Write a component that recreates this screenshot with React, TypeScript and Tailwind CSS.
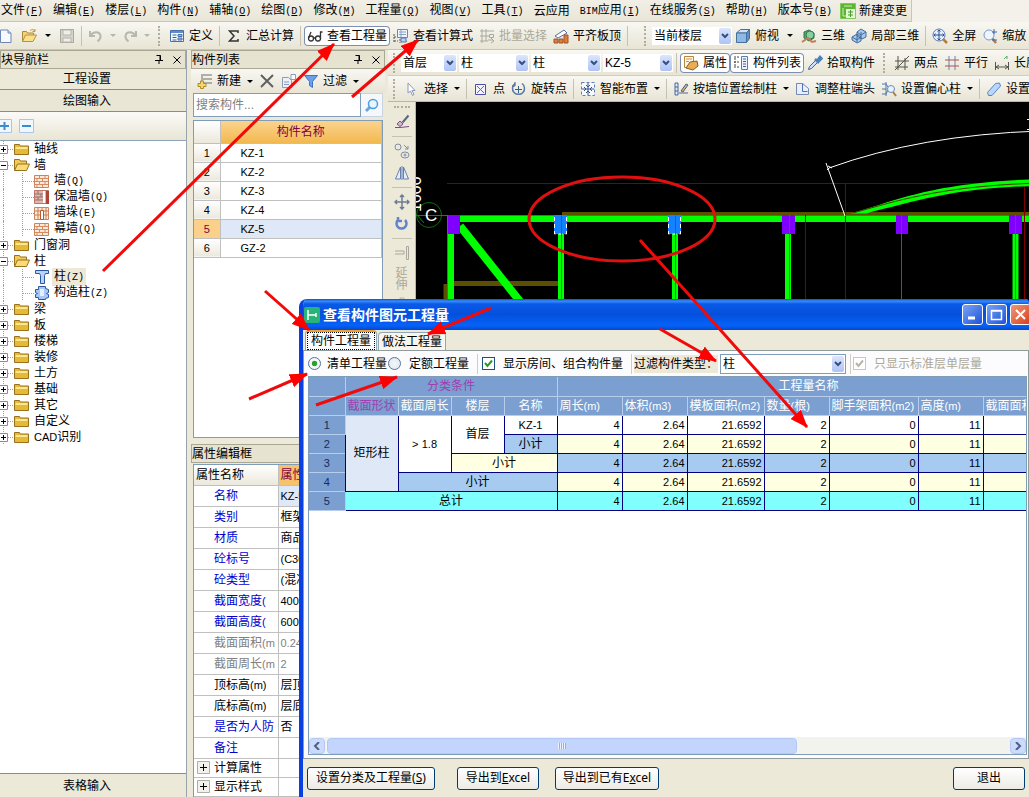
import { useState } from 'react';
import type { ReactNode } from 'react';
import clsx from 'clsx';

const ICONS: Record<string, ReactNode> = {
  file: (
    <>
      <path d="M1.500 2h7.500l3 3v9.500h-10.500z" fill="#f6f9ff" stroke="#6d86b3" />
      <path d="M9 2v3h3" fill="#d5e0f4" stroke="#6d86b3" />
    </>
  ),
  open: (
    <>
      <path d="M1.500 13.500v-10h4l1 1.500h6v3" fill="#f3d27b" stroke="#a88a3d" />
      <path d="M1.500 13.500l3-6.500h11l-3.500 6.500z" fill="#fbe08c" stroke="#b8933b" />
      <path d="M9 2.500c2-1.500 4-1 5 .500m0-2v2.500h-2.500" fill="none" stroke="#c49a3c" />
    </>
  ),
  save: (
    <>
      <path d="M1.500 1.500h13v13h-13z" fill="#d6d4ca" stroke="#aaa89e" />
      <path d="M4 2h8v5h-8zM4 10h8v4h-8z" fill="#efeee8" stroke="#b7b5ac" />
    </>
  ),
  undo: <path d="M2 3v5h5M2.500 7.500c3-4.500 9-4 10 0c.500 3-1 4.500-3 6" fill="none" stroke="#bab8ae" strokeWidth="2" />,
  redo: <path d="M14 3v5h-5M13.500 7.500c-3-4.500-9-4-10 0c-.500 3 1 4.500 3 6" fill="none" stroke="#bab8ae" strokeWidth="2" />,
  define: (
    <>
      <path d="M1.500 2.500h13v11h-13z" fill="#f4f8ff" stroke="#4a70a8" />
      <path d="M2 3h12v2h-12z" fill="#5f8ccb" />
      <path d="M3.500 7h4M3.500 9.500h4M3.500 12h4" stroke="#3a5f9c" />
      <path d="M9 6.500h4v2h-4zM9 10h4v2h-4z" fill="#9fbce4" stroke="#4a70a8" />
    </>
  ),
  sigma: <path d="M12 5V3H3.500l4.500 5l-4.500 5h8.500v-2" fill="none" stroke="#333" strokeWidth="1.500" />,
  glasses: (
    <g fill="none" stroke="#333" strokeWidth="1.300">
      <circle cx="4" cy="10.500" r="2.500" />
      <circle cx="11" cy="10.500" r="2.500" />
      <path d="M6.500 10h2M1.500 10l2.500-6M13.500 10.500v-6.500h2" />
    </g>
  ),
  calc: (
    <>
      <path d="M4.500 1.500h10v8h-10z" fill="#eef4ff" stroke="#6c87b4" />
      <path d="M6 4h7M6 6.500h7M8 2v7" stroke="#8aa2ca" />
      <path d="M1 6v8M1 9h3M1 13h4M7 11v4M12 11l2 3" stroke="#555" strokeDasharray="2 1" />
      <path d="M8 10h5v4h-5z" fill="#b6cff5" stroke="#5b79ab" />
    </>
  ),
  batch: (
    <g fill="none" stroke="#aaa89e">
      <path d="M1 3h14M1 8h9M1 13h8M3 1v14M7 1v12" />
      <path d="M10.500 6.500h4v3h-4zM9 12h5M12 10l3 3-3 2" />
    </g>
  ),
  slab: (
    <>
      <path d="M2 8l9-6l3 3l-9 5z" fill="#fff" stroke="#536fa5" />
      <path d="M1 11h4v4h-4zM6 11h4v4h-4zM11 7h4v8h-4z" fill="#d9803f" stroke="#a3532a" />
    </>
  ),
  cube: (
    <>
      <path d="M1.500 5l4-3.500h9l-3 3.500z" fill="#cde3fb" stroke="#44719e" />
      <path d="M1.500 5h10v9.500h-10z" fill="#8fb9e4" stroke="#44719e" />
      <path d="M11.500 5l3-3.500v9l-3 4z" fill="#5f8fc4" stroke="#44719e" />
    </>
  ),
  orbit: (
    <>
      <path d="M3 4l5-2l5 3v5l-5 3l-5-3z" fill="#4ea96b" stroke="#2f7548" />
      <circle cx="9" cy="7" r="4" fill="#87cfa0" stroke="#397a52" />
      <path d="M1 14l6-4l4 4l4-1" fill="none" stroke="#c77b50" strokeWidth="2" />
    </>
  ),
  part3d: (
    <>
      <path d="M1 9l5-3l4 3v4l-4 2l-5-3zM6 4l4-3l5 3v5l-4 2l-5-3z" fill="#a8c8ee" stroke="#456e9d" />
      <path d="M6 6v8M1 9l5 3l4-3M10 4v7M6 4l4 3l5-3" fill="none" stroke="#456e9d" />
    </>
  ),
  full: (
    <>
      <path d="M11 11l4 4" stroke="#b77b3b" strokeWidth="2.500" />
      <circle cx="7" cy="7" r="6" fill="#e4efff" stroke="#5a7ab3" />
      <path d="M7 2v10M2 7h10M5.500 3.500L7 2l1.500 1.500M5.500 10.500L7 12l1.500-1.500M3.500 5.500L2 7l1.500 1.500M10.500 5.500L12 7l-1.500 1.500" fill="none" stroke="#2d4f92" />
    </>
  ),
  zoom: (
    <>
      <path d="M10 10l4 5" stroke="#b77b3b" strokeWidth="2.500" />
      <circle cx="7" cy="7" r="5" fill="#edf5ff" stroke="#7b98c8" />
      <path d="M12 1v5m-2-2h5M10 12h5" stroke="#3d65a7" />
    </>
  ),
  props: (
    <>
      <path d="M1.500 1.500h9v11h-9z" fill="#fff8e8" stroke="#b4863d" />
      <path d="M3 4h6M3 6.500h3" stroke="#d58e37" />
      <path d="M3 13l4-6l7-1l1 5l-5 4z" fill="#e8ae53" stroke="#8d5c1d" />
    </>
  ),
  list: (
    <>
      <path d="M8.500 1.500h6v13h-6z" fill="#eef4ff" stroke="#587dad" />
      <path d="M10 4h3M10 6.500h3M10 9h3M10 11.500h3" stroke="#3b64a1" />
      <path d="M1 2h2M1 7h2M1 12h2M4 2h3M4 7h3M4 12h3M2 3v9" stroke="#444" strokeDasharray="2 1" />
    </>
  ),
  pick: (
    <>
      <path d="M1.500 14.500l1-3l6.500-6.500l2 2l-6.500 6.500z" fill="#c9dffd" stroke="#44688f" />
      <path d="M8 4l4 4M10 6l3-4l1.500 1.500L11 7" stroke="#4d7fb9" strokeWidth="2.500" fill="#6f9bd1" />
    </>
  ),
  twoPoint: <path d="M4 1v14M11 3v12M1 6h14M1 12h13M1 15L15 1" stroke="#55534b" fill="none" />,
  parallel: (
    <>
      <path d="M5 1v14M11 1v14" stroke="#6d83a8" />
      <path d="M1 5h14M1 11h14" stroke="#b05450" />
    </>
  ),
  length: (
    <>
      <path d="M1.500 7v8M14.500 7v8M2 12h12M5 10l-3 2l3 2M11 10l3 2l-3 2" fill="none" stroke="#55534b" />
      <path d="M10 4l3-3m0 0v3" stroke="#5ba967" />
    </>
  ),
  cursor: <path d="M4 2v10l2.500-2l2 4.500l1.500-1l-2-4h3z" fill="#fff" stroke="#8b9abb" />,
  point: (
    <>
      <path d="M2.500 3.500h10v10h-10z" fill="#f3f2ff" stroke="#4c4cb0" />
      <path d="M4 5l7 7M11 5l-7 7" stroke="#a04d8d" />
    </>
  ),
  rotatePoint: (
    <>
      <path d="M4 2.500a6 6 0 1 0 7 0" fill="none" stroke="#557aa8" strokeWidth="1.500" />
      <path d="M4 1v4H1M7.500 5v7M4 8.500h7" fill="none" stroke="#405f8d" />
    </>
  ),
  smart: (
    <>
      <path d="M1.500 1.500h13v13h-13z" fill="#f5f8ff" stroke="#6380ae" strokeDasharray="3 2" />
      <path d="M8 2v12M2 8h12M6 4l2 2l2-2M6 12l2-2l2 2M4 6l2 2l-2 2M12 6l-2 2l2 2" fill="none" stroke="#3b5484" />
    </>
  ),
  wallPos: (
    <>
      <path d="M2 2h3v12h-3zM6 12h9" fill="#dfe9fb" stroke="#49699b" />
      <path d="M2 6h3M2 10h3M8 10l5-7l2 1l-5 7z" fill="#cbb06d" stroke="#4f638e" />
    </>
  ),
  adjust: (
    <>
      <path d="M1.500 2.500h6l6 5v6h-12z" fill="#e8effc" stroke="#7589b2" />
      <path d="M7.500 2.500v8h5" fill="none" stroke="#4f70b1" />
    </>
  ),
  offset: (
    <>
      <path d="M1 3h4l2 3M1 8h4M1 13h4l2-4M5 1v14" fill="none" stroke="#4b76a9" />
      <path d="M12 11l3 4" stroke="#b77b3b" strokeWidth="2" />
      <circle cx="10" cy="8" r="3.500" fill="#eaf3ff" stroke="#6b8bbb" />
    </>
  ),
  eraser: <path d="M1.500 11.500l8-9l4-.500l1 3l-8.500 9.500l-3.500 0z" fill="#b9d6fb" stroke="#5a86c1" />,
  add: (
    <>
      <path d="M6 2h9M6 6h9M6 10h9M5 1v10" stroke="#6f6d65" fill="none" />
      <path d="M3.500 8h3v2.500h2.500v3h-2.500v2h-3v-2h-2.500v-3h2.500z" fill="#f6d768" stroke="#ad8a2d" />
    </>
  ),
  remove: <path d="M2 2l12 12M14 2l-12 12" stroke="#606060" strokeWidth="2" />,
  copy: (
    <>
      <path d="M1.500 4.500h6l3 3v7h-9z" fill="#edf1fa" stroke="#8d9bb8" />
      <path d="M3 9h5M3 11.500h5M10 1.500h4.500v5h-4.500z" fill="#fff" stroke="#8d9bb8" />
    </>
  ),
  funnel: <path d="M1.500 2.500h13l-5 6v6l-3-2v-4z" fill="#6ba0ea" stroke="#3f72c0" />,
  search: (
    <>
      <path d="M6 10l-4 4" stroke="#6ea5dd" strokeWidth="3" />
      <circle cx="9" cy="7" r="4.500" fill="#e9f6ff" stroke="#4da0e0" strokeWidth="1.500" />
    </>
  ),
  brush: (
    <>
      <path d="M14.500 1.500l-6 7" stroke="#5b6782" strokeWidth="2" />
      <path d="M6 7l3 3l-3 2.500l-3-2.500z" fill="#d7b4dd" stroke="#755283" />
      <path d="M1 13.500h5l9-1" stroke="#7a4e78" fill="none" />
    </>
  ),
  shapes: (
    <g fill="none" stroke="#7e8daa">
      <circle cx="4" cy="4" r="3" />
      <path d="M10 2l4 4m0-3v3h-3" />
      <ellipse cx="11" cy="12" rx="4" ry="3" />
      <circle cx="11" cy="12" r="1" />
    </g>
  ),
  mirror: <path d="M6.500 2v12h-5zM9.500 2v12h5zM8 1v14" fill="#e7eefc" stroke="#6380b1" />,
  move: <path d="M8 1v14M1 8h14M6 3l2-2l2 2M6 13l2 2l2-2M3 6L1 8l2 2M13 6l2 2l-2 2" fill="none" stroke="#6e7b94" strokeWidth="1.500" />,
  rotate: <path d="M4 4a5 5 0 1 0 7 0M4 1v4h4" fill="none" stroke="#6284ce" strokeWidth="2.500" />,
  extend: <path d="M1 6h9v3h-9M12.500 1.500h2v13h-2z" fill="none" stroke="#aaa89e" />,
  cross: <path d="M6 1h4v5h5v4h-14v-4h5z" fill="none" stroke="#b5b3a9" />,
  change: (
    <>
      <path d="M.500.500h15v15h-15z" fill="#5cb531" stroke="#82c95c" />
      <path d="M4 3h8M3 5v8h7" stroke="#c7efaf" fill="none" />
      <path d="M6 6h9v9h-9z" fill="#e4f8d8" />
      <path d="M8 9h5M10.500 7v7M8 12h5" stroke="#4b9a2d" />
    </>
  ),
  plus: (
    <>
      <path d="M.500 1.500h14v13h-14z" fill="#f1f7ff" stroke="#aac5e8" />
      <path d="M3 8h9M7.500 4v8" stroke="#3e8bcb" strokeWidth="2" />
    </>
  ),
  minus: (
    <>
      <path d="M.500 1.500h14v13h-14z" fill="#f1f7ff" stroke="#aac5e8" />
      <path d="M3 8h9" stroke="#3e8bcb" strokeWidth="2" />
    </>
  ),
  folder: (
    <>
      <path d="M.500 3.500h5l1 1.500h8v8.500h-14z" fill="#e8b838" stroke="#98731c" />
      <path d="M1.500 6h12v2h-12z" fill="#fae68f" />
    </>
  ),
  folderOpen: (
    <>
      <path d="M.500 13.500v-11h5l1 1.500h6v3" fill="#f1ca58" stroke="#98731c" />
      <path d="M.500 13.500l3-6.500h12l-3 6.500z" fill="#f9dc78" stroke="#98731c" />
    </>
  ),
  brick: (
    <>
      <path d="M.500 2.500h14v12h-14z" fill="#f9eadc" stroke="#c98461" />
      <path d="M1 5.500h13M1 8.500h13M1 11.500h13M5.500 3v2.500M11 3v2.500M3 5.500v3M8.500 5.500v3M5.500 8.500v3M11 8.500v3M3 11.500v3M8.500 11.500v3" stroke="#d98a61" />
    </>
  ),
  brickInsulated: (
    <>
      <path d="M.500 1.500h14v13h-14z" fill="#e2b6ac" stroke="#b7766a" />
      <path d="M1 5h8M1 8h8M1 11h8M4 2v3M7 5v3M4 8v3" stroke="#94716f" />
      <path d="M9 2h2v12h-2z" fill="#fff" />
      <path d="M12 2h3v13h-3z" fill="#ad4433" />
    </>
  ),
  buttress: (
    <>
      <path d="M.500 2.500h14v12h-14z" fill="#f9eadc" stroke="#c98461" />
      <path d="M1 6h13M1 10h13M4 3v11M8 3v11M12 3v11" stroke="#cf7c50" />
      <path d="M6.500 5.500h3v9h-3z" fill="#fff" stroke="#b45b35" />
    </>
  ),
  column: <path d="M1.500 1.500h13v3h-3l-1 2v8h-4v-8l-1-2h-4z" fill="#b9d4fa" stroke="#2c569f" />,
  tieColumn: (
    <>
      <path d="M4.500 1.500h7v2l3 1v3l-2 1l2 1v3l-3 1v1h-7v-2h-3v-3l2-1l-2-1v-3h3z" fill="#a7c7f6" stroke="#2c569f" />
      <path d="M6 4h4v7h-4z" fill="#e3efff" />
    </>
  ),
};

function Icon({ name }: { name: string }) {
  return (
    <svg viewBox="0 0 16 16" className="h-4 w-4 shrink-0" aria-hidden="true">
      {ICONS[name]}
    </svg>
  );
}

// Latin runs are set narrower than the Chinese glyphs, two of them to one square
function Mixed({ text }: { text: string }) {
  return (
    <>
      {text.split(/([\x21-\x7e]+)/).map((part, i) =>
        i % 2 ? (
          <span key={i} className="font-['Liberation_Sans'] text-[11px]">{part}</span>
        ) : (
          part
        )
      )}
    </>
  );
}

const Sep = () => <span className="mx-[3px] h-5 w-px shrink-0 bg-[#c5c2b2]" />;
const Grip = () => <span className="mx-[5px] h-5 w-[3px] shrink-0 border-l-2 border-dotted border-[#b0ad9d]" />;

function Drop({ wide, muted }: { wide?: boolean; muted?: boolean }) {
  return (
    <button aria-label="▾" className={clsx('flex h-5 shrink-0 items-center justify-center', wide ? 'w-4' : 'w-3')}>
      <svg viewBox="0 0 6 3" className="h-[3px] w-1.5"><path d="M0 0h6L3 3z" fill={muted ? '#b8b6aa' : '#000'} /></svg>
    </button>
  );
}

function Tool({ icon, label, active, disabled }: { icon: string; label?: string; active?: boolean; disabled?: boolean }) {
  return (
    <button
      aria-label={label ? undefined : icon}
      disabled={disabled}
      className={clsx(
        'flex h-5 shrink-0 items-center gap-1 px-[3px] whitespace-nowrap',
        active && 'rounded-sm bg-white ring-1 ring-[#7c8fb0] ring-inset',
        disabled && 'text-[#aca899]'
      )}
    >
      <Icon name={icon} />
      {label}
    </button>
  );
}

function Combo({ label, value, className }: { label: string; value: string; className: string }) {
  return (
    <div className={clsx('relative shrink-0', className)}>
      <select aria-label={label} className="h-[18px] w-full appearance-none bg-white pl-0.5 outline-none" defaultValue={value}>
        <option>{value}</option>
      </select>
      <span className="pointer-events-none absolute top-px right-px bottom-px flex w-3 items-center justify-center rounded-[2px] bg-gradient-to-b from-[#dce6fd] to-[#aec3f5]">
        <svg viewBox="0 0 8 6" className="h-1.5 w-2"><path d="M1 1l3 3l3-3" fill="none" stroke="#33507f" strokeWidth="2" /></svg>
      </span>
    </div>
  );
}

const MENUS: [string, string?][] = [
  ['文件', 'F'], ['编辑', 'E'], ['楼层', 'L'], ['构件', 'N'], ['辅轴', 'O'], ['绘图', 'D'], ['修改', 'M'],
  ['工程量', 'Q'], ['视图', 'V'], ['工具', 'T'], ['云应用'], ['BIM应用', 'I'], ['在线服务', 'S'], ['帮助', 'H'], ['版本号', 'B'],
];

function MenuBar() {
  return (
    <nav className="flex h-[22px] shrink-0 bg-[#f3f1e9]">
      <div className="flex items-center gap-2.5 border-r border-b border-[#c9c6b8] bg-gradient-to-b from-[#f1efe6] to-[#e9e6d8] pr-1 pl-px">
        {MENUS.map(([name, key]) => (
          <button key={name} className="shrink-0 whitespace-nowrap">
            {name.startsWith('BIM') ? (
              <><span className="font-['Liberation_Mono'] text-[10px]">BIM</span>应用</>
            ) : name}
            {key && (
              <span className="font-['Liberation_Mono'] text-[10px]">(<u>{key}</u>)</span>
            )}
          </button>
        ))}
        <button className="-ml-0.5 flex shrink-0 items-center gap-[3px]">
          <Icon name="change" />新建变更
        </button>
      </div>
    </nav>
  );
}

function MainToolbar() {
  return (
    <div className="flex h-7 shrink-0 items-center border-b border-[#c9c6b8] bg-gradient-to-b from-[#f8f7f2] to-[#e8e5d5]">
      <div className="-ml-1 flex items-center">
        <Tool icon="file" />
        <Tool icon="open" />
        <Drop wide />
        <Tool icon="save" disabled />
      </div>
      <Sep />
      <Tool icon="undo" disabled />
      <Drop muted />
      <Tool icon="redo" disabled />
      <Drop muted />
      <Grip />
      <Tool icon="define" label="定义" />
      <Sep />
      <Tool icon="sigma" label="汇总计算" />
      <Sep />
      <Tool icon="glasses" label="查看工程量" active />
      <Tool icon="calc" label="查看计算式" />
      <Tool icon="batch" label="批量选择" disabled />
      <Tool icon="slab" label="平齐板顶" />
      <Sep />
      <span className="w-2 shrink-0" />
      <Grip />
      <Combo label="楼层范围" value="当前楼层" className="w-20" />
      <Tool icon="cube" label="俯视" />
      <Drop wide />
      <Tool icon="orbit" label="三维" />
      <Tool icon="part3d" label="局部三维" />
      <Sep />
      <Tool icon="full" label="全屏" />
      <Tool icon="zoom" label="缩放" />
    </div>
  );
}

function PanelTitle({ children }: { children: ReactNode }) {
  return (
    <div className="flex h-[19px] shrink-0 items-center border border-[#aaa794] bg-[#e6e3d1]">
      <h2 className="flex-1 truncate">{children}</h2>
      <button aria-label="pin" className="mr-2.5">
        <svg viewBox="0 0 8 9" className="h-[9px] w-2"><path d="M1.500.500h4v5h-4M5 .500v5M0 5.500h8M4 6v3" fill="none" stroke="#000" /></svg>
      </button>
      <button aria-label="close" className="mr-1">
        <svg viewBox="0 0 8 8" className="h-2 w-2"><path d="M.500.500l7 7M7.500.500l-7 7" stroke="#000" /></svg>
      </button>
    </div>
  );
}

interface TreeItem {
  name: string;
  icon?: string;
  open?: boolean;
  selected?: boolean;
}

const TREE: TreeItem[] = [
  { name: '轴线' },
  { name: '墙', open: true },
  { name: '墙(Q)', icon: 'brick' },
  { name: '保温墙(Q)', icon: 'brickInsulated' },
  { name: '墙垛(E)', icon: 'buttress' },
  { name: '幕墙(Q)', icon: 'brick' },
  { name: '门窗洞' },
  { name: '柱', open: true },
  { name: '柱(Z)', icon: 'column', selected: true },
  { name: '构造柱(Z)', icon: 'tieColumn' },
  { name: '梁' }, { name: '板' }, { name: '楼梯' }, { name: '装修' }, { name: '土方' },
  { name: '基础' }, { name: '其它' }, { name: '自定义' }, { name: 'CAD识别' },
];

function TreeRow({ item }: { item: TreeItem }) {
  if (item.icon) {
    return (
      <li className="flex h-4 items-center pl-[3px]">
        <span className="h-4 w-[19px] shrink-0 border-l border-dotted border-[#a0a0a0]" />
        <svg viewBox="0 0 12 16" className="h-4 w-3 shrink-0">
          <path d="M.500 0v16M1 8.500h11" stroke="#a0a0a0" strokeDasharray="1 1" />
        </svg>
        <Icon name={item.icon} />
        <span className={clsx('ml-0.5 px-0.5 leading-4', item.selected && 'bg-[#ece9d8]')}>
          {item.name.slice(0, -3)}
          <span className="font-['Liberation_Mono'] text-[10px]">{item.name.slice(-3)}</span>
        </span>
      </li>
    );
  }
  return (
    <li className="flex h-4 items-center">
      <svg viewBox="0 0 14 16" className="h-4 w-3.5 shrink-0">
        <path d="M3.500 0v16M8 8.500h6" stroke="#a0a0a0" strokeDasharray="1 1" />
        <path d="M-.500 4.500h8v8h-8z" fill="#fff" stroke="#7b8fa8" />
        <path d={item.open ? 'M1 8.500h5' : 'M1 8.500h5M3.500 6v5'} stroke="#000" />
      </svg>
      <Icon name={item.open ? 'folderOpen' : 'folder'} />
      <span className="ml-1 leading-4"><Mixed text={item.name} /></span>
    </li>
  );
}

function Navigator() {
  return (
    <aside className="flex w-[187px] shrink-0 flex-col border-r border-[#9aa3ad]">
      <PanelTitle>块导航栏</PanelTitle>
      <button className="h-[21px] shrink-0 border-b border-[#8f8c7c] bg-[#ece9d8] pr-3">工程设置</button>
      <button className="h-[22px] shrink-0 border-b border-[#8f8c7c] bg-[#e9e6d5] pr-3">绘图输入</button>
      <div className="-ml-1.5 flex h-7 shrink-0 items-center bg-gradient-to-b from-[#fbfaf7] to-[#e9e6d5]">
        <Tool icon="plus" />
        <Tool icon="minus" />
      </div>
      <ul className="min-h-0 flex-1 overflow-hidden border-t border-[#8da3b8] bg-white">
        {TREE.map(item => (
          <TreeRow key={item.name} item={item} />
        ))}
      </ul>
      <button className="h-6 shrink-0 border-t border-[#8f8c7c] bg-[#ece9d8] pr-3">表格输入</button>
    </aside>
  );
}

const COMPONENTS = ['KZ-1', 'KZ-2', 'KZ-3', 'KZ-4', 'KZ-5', 'GZ-2'];

function ComponentList() {
  const [selected, setSelected] = useState('KZ-5');
  const [query, setQuery] = useState('');

  return (
    <section className="flex h-[388px] shrink-0 flex-col">
      <PanelTitle>构件列表</PanelTitle>
      <div className="flex h-6 shrink-0 items-center bg-gradient-to-b from-[#f8f7f2] to-[#e8e5d5] pl-[3px]">
        <Tool icon="add" label="新建" />
        <Drop />
        <Tool icon="remove" />
        <Tool icon="copy" />
        <Tool icon="funnel" label="过滤" />
        <Drop />
      </div>
      <div className="mx-0.5 flex h-6 shrink-0">
        <input
          type="text"
          aria-label="搜索构件"
          placeholder="搜索构件..."
          value={query}
          onChange={(e) => setQuery(e.target.value)}
          className="min-w-0 flex-1 border border-[#7f9db9] bg-white px-0.5 placeholder:text-[#7f7f7f]"
        />
        <button aria-label="search" className="flex w-[22px] items-center justify-center border border-l-0 border-[#c9d4e0] bg-[#f4f7fb]">
          <Icon name="search" />
        </button>
      </div>
      <div className="mx-0.5 mt-[3px] flex-1 border border-[#7f9db9] bg-white">
        <table className="w-full table-fixed border-collapse">
          <thead>
            <tr className="h-[22px]">
              <th className="w-[26px] border-b border-[#c0c0c0] bg-gradient-to-b from-white to-[#ebe8dc]" />
              <th className="border border-t-0 border-[#c0c0c0] bg-gradient-to-b from-[#fbd38c] to-[#f2b84d] p-0 font-normal text-[#800040]">构件名称</th>
            </tr>
          </thead>
          <tbody>
            {COMPONENTS.map((name, i) => (
              <tr key={name} onClick={() => setSelected(name)} className={clsx('h-[19px]', selected === name && 'bg-[#dfe8f6]')}>
                <td className={clsx('border-b border-[#c0c0c0] p-0 text-center leading-[18px]', selected === name ? 'bg-[#fbd08a] text-[#800040]' : 'bg-gradient-to-b from-white to-[#ebe8dc]')}>
                  <Mixed text={String(i + 1)} />
                </td>
                <td className="border border-[#c0c0c0] py-0 pl-5 leading-[18px]"><Mixed text={name} /></td>
              </tr>
            ))}
          </tbody>
        </table>
      </div>
    </section>
  );
}

const PROPERTIES: [string, string, string][] = [
  ['名称', 'KZ-5', 'text-[#0000d0]'],
  ['类别', '框架柱', 'text-[#0000d0]'],
  ['材质', '商品混凝土', 'text-[#0000d0]'],
  ['砼标号', '(C30)', 'text-[#0000d0]'],
  ['砼类型', '(混凝土)', 'text-[#0000d0]'],
  ['截面宽度(', '400', 'text-[#0000d0]'],
  ['截面高度(', '600', 'text-[#0000d0]'],
  ['截面面积(m', '0.24', 'text-[#808080]'],
  ['截面周长(m', '2', 'text-[#808080]'],
  ['顶标高(m)', '层顶标高', 'text-black'],
  ['底标高(m)', '层底标高', 'text-black'],
  ['是否为人防', '否', 'text-[#0000d0]'],
  ['备注', '', 'text-[#0000d0]'],
];

function PropertyEditor() {
  return (
    <section className="mt-1.5 flex min-h-0 flex-1 flex-col overflow-hidden">
      <PanelTitle>属性编辑框</PanelTitle>
      <div className="mx-0.5 mt-px flex-1 border border-[#7f9db9] bg-white">
        <table className="w-full table-fixed border-collapse whitespace-nowrap">
          <thead>
            <tr className="h-5">
              <th className="w-[84px] border-r border-b border-[#c0c0c0] bg-gradient-to-b from-white to-[#ebe8dc] px-0.5 text-left font-normal">属性名称</th>
              <th className="border-b border-[#c0c0c0] bg-[#f5c36b] px-0.5 text-left font-normal text-[#800040]">属性值</th>
            </tr>
          </thead>
          <tbody>
            {PROPERTIES.map(([name, value, tone], i) => (
              <tr key={name} className="h-[21px]">
                <td className={clsx('overflow-hidden border-r border-b border-[#c0c0c0] py-0 pr-0 pl-5', tone)}><Mixed text={name} /></td>
                <td className={clsx('overflow-hidden border-b border-[#c0c0c0] px-0.5 py-0', i === 0 && 'bg-[#dfe8f6]', tone === 'text-[#808080]' && tone)}>
                  <Mixed text={value} />
                </td>
              </tr>
            ))}
            {['计算属性', '显示样式'].map(name => (
              <tr key={name} className="h-[19px]">
                <td className="border-r border-b border-[#c0c0c0] p-0">
                  <button className="flex h-[18px] items-center gap-1 pl-[3px]">
                    <svg viewBox="0 0 13 13" className="h-[13px] w-[13px]">
                      <path d="M.500.500h12v12h-12z" fill="#f2f1ec" stroke="#b0aea4" />
                      <path d="M3 6.500h7M6.500 3v7" stroke="#000" />
                    </svg>
                    {name}
                  </button>
                </td>
                <td className="border-b border-[#c0c0c0]" />
              </tr>
            ))}
          </tbody>
        </table>
      </div>
    </section>
  );
}

function DrawToolbars() {
  return (
    <div className="shrink-0 overflow-hidden">
      <div className="flex h-[26px] items-center border-b border-[#d2cfc0] bg-gradient-to-b from-[#f8f7f2] to-[#e8e5d5]">
        <Grip />
        <div className="flex gap-0.5">
          <Combo label="楼层" value="首层" className="w-14" />
          <Combo label="类型" value="柱" className="w-[70px]" />
          <Combo label="构件类型" value="柱" className="w-[70px]" />
          <Combo label="构件" value="KZ-5" className="w-[70px]" />
        </div>
        <Sep />
        <Tool icon="props" label="属性" active />
        <Tool icon="list" label="构件列表" active />
        <Tool icon="pick" label="拾取构件" />
        <Grip />
        <Tool icon="twoPoint" label="两点" />
        <Tool icon="parallel" label="平行" />
        <Tool icon="length" label="长度" />
      </div>
      <div className="flex h-[26px] items-center border-b border-[#b9b6a6] bg-gradient-to-b from-[#f8f7f2] to-[#e8e5d5]">
        <Grip />
        <Tool icon="cursor" label="选择" />
        <Drop />
        <Sep />
        <Tool icon="point" label="点" />
        <Tool icon="rotatePoint" label="旋转点" />
        <Sep />
        <Tool icon="smart" label="智能布置" />
        <Drop />
        <Sep />
        <Tool icon="wallPos" label="按墙位置绘制柱" />
        <Drop />
        <Tool icon="adjust" label="调整柱端头" />
        <Tool icon="offset" label="设置偏心柱" />
        <Drop />
        <Sep />
        <Tool icon="eraser" label="设置" />
      </div>
    </div>
  );
}

function SideTools() {
  return (
    <div className="flex w-7 shrink-0 flex-col items-center gap-1.5 border-r border-[#b9b6a6] bg-[#ece9d8] pt-1">
      <span className="w-4 border-t-2 border-dotted border-[#b0ad9d]" />
      <Icon name="brush" />
      <span className="h-px w-5 bg-[#c5c2b2]" />
      <Icon name="shapes" />
      <Icon name="mirror" />
      <span className="h-px w-5 bg-[#c5c2b2]" />
      <Icon name="move" />
      <Icon name="rotate" />
      <span className="h-px w-5 bg-[#c5c2b2]" />
      <Icon name="extend" />
      <span className="w-3 leading-3 text-[#aca899]">延伸</span>
      <Icon name="cross" />
    </div>
  );
}

function Canvas() {
  return (
    <svg className="h-full min-w-0 flex-1 bg-black" aria-label="平面图">
      <g transform="translate(-416 -102)">
        <path d="M447 183.500H1400" stroke="#7f0000" />
        <path d="M562 213.500H1400" stroke="#5a5000" strokeWidth="3" />
        <path d="M454 283.500h104M446 284v100" stroke="#5a5000" strokeWidth="5" />
        <path d="M460 226L538 324" stroke="#0f0" strokeWidth="8" />
        <path d="M450 219H1400" stroke="#0f0" strokeWidth="6" />
        <path d="M447 215.500H1400M447.500 215v200" stroke="#8c5a10" />
        <path d="M451 230v200M561 230v200M675 230v200M788 230v200M1015.500 230v200" stroke="#0f0" strokeWidth="6" />
        <path d="M448 215h12v19h-12zM782 215h13v19h-13zM896 215h12v19h-12zM1009 215h13v19h-13z" fill="#8000ff" />
        <path d="M554 215h13v19h-13zM668 215h13v19h-13z" fill="#1482ff" />
        <path d="M554.500 217v17h12v-17M668.500 217v17h12v-17" fill="none" stroke="#fff" strokeDasharray="4 3" />
        <path d="M561.500 215v200M675.500 215v200M789.500 215v200M1015.500 215v200" stroke="#92521c" />
        <path d="M805.500 215v200M845.500 184v200M1024.500 184v200" stroke="#7f0000" />
        <path d="M901.500 215v200M561.500 216v18M675.500 216v18M789.500 216v18M1015.500 216v18" stroke="#c8203c" />
        <path d="M851 213.500C900 199 936 182 1040 179v7C960 187 920 200 866 213.500z" fill="#0f0" />
        <path d="M853 213C900 200 942 186 1040 183" fill="none" stroke="#4a3800" />
        <path d="M826 163l19 53M829 168l-2 2m1-4l4 2M829 168Q920 135 1040 131" fill="none" stroke="#fff" />
        <path d="M1027 119.500h4M1027 129.500h4" stroke="#fff" />
        <circle cx="429" cy="215" r="12.500" fill="none" stroke="#0a6e0a" />
        <path d="M416 215.500h31M417 215l7 8" stroke="#0a8a0a" />
        <text x="425" y="221" fill="#fff" fontSize="17" fontFamily="Liberation Sans">C</text>
        <text transform="translate(421 212) rotate(-90)" fill="#fff" fontSize="16" fontFamily="Liberation Sans">1000</text>
      </g>
    </svg>
  );
}

const QUANTITIES = [
  { head: '周长(m)', value: '4', width: 'w-[65px]' },
  { head: '体积(m3)', value: '2.64', width: 'w-[65px]' },
  { head: '模板面积(m2)', value: '21.6592', width: 'w-[77px]' },
  { head: '数量(根)', value: '2', width: 'w-[65px]' },
  { head: '脚手架面积(m2)', value: '0', width: 'w-[89px]' },
  { head: '高度(m)', value: '11', width: 'w-[65px]' },
  { head: '截面面积(m2)', value: '', width: 'w-[89px]' },
];

const GROUPS: { text: string; className: string; rowSpan?: number; colSpan?: number }[][] = [
  [
    { text: '矩形柱', className: 'bg-[#dfe8f6]', rowSpan: 4 },
    { text: '> 1.8', className: 'bg-white', rowSpan: 3 },
    { text: '首层', className: 'bg-white', rowSpan: 2 },
    { text: 'KZ-1', className: 'bg-white' },
  ],
  [{ text: '小计', className: 'bg-[#a6caf0]' }],
  [{ text: '小计', className: 'bg-[#ffffe1]', colSpan: 2 }],
  [{ text: '小计', className: 'bg-[#a6caf0]', colSpan: 3 }],
  [{ text: '总计', className: 'bg-[#7ffffe]', colSpan: 4 }],
];

const ROW_COLORS = ['bg-white', 'bg-[#ffffe1]', 'bg-[#a6caf0]', 'bg-[#ffffe1]', 'bg-[#7ffffe]'];

function QuantityTable() {
  return (
    <table className="w-[752px] table-fixed border-collapse whitespace-nowrap">
      <colgroup>
        <col className="w-9" />
        <col className="w-[53px]" />
        <col className="w-[53px]" />
        <col className="w-[53px]" />
        <col className="w-[53px]" />
        {QUANTITIES.map(q => <col key={q.head} className={q.width} />)}
      </colgroup>
      <thead className="bg-[#7a9fd0] text-white">
        <tr className="h-[19px]">
          <th className="border border-t-0 border-l-0 border-[#b8cdea] p-0" />
          <th colSpan={4} className="border border-t-0 border-[#b8cdea] p-0 font-normal text-[#a040b0]">分类条件</th>
          <th colSpan={7} className="border border-t-0 border-[#b8cdea] p-0 pr-3 font-normal">工程量名称</th>
        </tr>
        <tr className="h-[19px]">
          <th className="border border-l-0 border-[#b8cdea]" />
          {['截面形状', '截面周长', '楼层', '名称'].map((head, i) => (
            <th key={head} className={clsx('border border-[#b8cdea] p-0 font-normal', i === 0 && 'text-[#a040b0]')}>{head}</th>
          ))}
          {QUANTITIES.map(q => (
            <th key={q.head} className="border border-[#b8cdea] py-0 pr-0 pl-0.5 text-left font-normal"><Mixed text={q.head} /></th>
          ))}
        </tr>
      </thead>
      <tbody>
        {GROUPS.map((cells, row) => (
          <tr key={row} className="h-[19px]">
            <td className="border border-l-0 border-[#b8cdea] bg-[#7a9fd0] p-0 text-center leading-[18px] text-[#1b2a5c]"><Mixed text={String(row + 1)} /></td>
            {cells.map(cell => (
              <td key={cell.text} rowSpan={cell.rowSpan} colSpan={cell.colSpan} className={clsx('border border-[#000080] p-0 text-center leading-[18px]', cell.className)}>
                <Mixed text={cell.text} />
              </td>
            ))}
            {QUANTITIES.map(q => (
              <td key={q.head} className={clsx('border border-[#000080] py-0 pr-0.5 pl-0 text-right leading-[18px]', ROW_COLORS[row])}>
                <Mixed text={q.value} />
              </td>
            ))}
          </tr>
        ))}
      </tbody>
    </table>
  );
}

const RADIO = 'h-[13px] w-[13px] shrink-0 appearance-none rounded-full border border-[#51759a] bg-[radial-gradient(circle,#f3f6fa,#dfe6ef)] checked:bg-[radial-gradient(circle,#2ba32b_0_30%,#f3f6fa_40%)]';

function CheckBox({ label, checked, disabled }: { label: string; checked: boolean; disabled?: boolean }) {
  const [on, setOn] = useState(checked);
  return (
    <label className={clsx('flex items-center gap-2 whitespace-nowrap', disabled && 'text-[#aca899]')}>
      <span className="relative flex h-[13px] w-[13px]">
        <input
          type="checkbox"
          checked={on}
          disabled={disabled}
          onChange={(e) => setOn(e.target.checked)}
          className={clsx('h-full w-full appearance-none border bg-white', disabled ? 'border-[#cac8bb]' : 'border-[#1c5180]')}
        />
        {on && (
          <svg viewBox="0 0 13 13" className="pointer-events-none absolute inset-0">
            <path d="M3 6l2.500 3l4.500-5.500" fill="none" stroke={disabled ? '#b8b6aa' : '#21a121'} strokeWidth="2" />
          </svg>
        )}
      </span>
      {label}
    </label>
  );
}

const TITLE_BUTTON = 'flex h-[21px] w-[21px] shrink-0 items-center justify-center rounded-[3px] border border-white';
const XP_BUTTON = "h-[23px] rounded-[3px] border border-[#003c74] bg-gradient-to-b from-white to-[#ecebe5] font-['Noto_Sans','Noto_Sans_CJK_SC',sans-serif] whitespace-nowrap";

function QuantityDialog() {
  const [mode, setMode] = useState('list');

  return (
    <div role="dialog" className="absolute top-[299px] -right-1 bottom-0 left-[299px] flex flex-col overflow-hidden rounded-t-lg border-x-4 border-[#0a3fe0] bg-[#ece9d8]">
      <header className="-mx-1 flex h-[31px] shrink-0 items-center gap-[3px] bg-[linear-gradient(180deg,#0a4fd0_0%,#3a8cf8_7%,#0a5ae8_16%,#0450dc_50%,#0562fa_85%,#0348cc_100%)] pr-0.5 pl-[5px] text-white">
        <svg viewBox="0 0 16 16" className="h-4 w-4 shrink-0">
          <rect width="16" height="16" rx="2" fill="#28b478" />
          <path d="M4 3v10M4 8h8M12 6v4" fill="none" stroke="#fff" strokeWidth="1.500" />
        </svg>
        <h1 className="flex-1 text-[14px] font-bold">查看构件图元工程量</h1>
        <button aria-label="minimize" className={clsx(TITLE_BUTTON, 'bg-gradient-to-br from-[#7ba2f5] to-[#1c50d8]')}>
          <svg viewBox="0 0 13 13" className="h-[13px] w-[13px]"><path d="M2 10h7" stroke="#fff" strokeWidth="3" /></svg>
        </button>
        <button aria-label="maximize" className={clsx(TITLE_BUTTON, 'bg-gradient-to-br from-[#7ba2f5] to-[#1c50d8]')}>
          <svg viewBox="0 0 13 13" className="h-[13px] w-[13px]"><path d="M1.500 2.500h10v9h-10zM1 3h11" fill="none" stroke="#fff" strokeWidth="1.500" /></svg>
        </button>
        <button aria-label="close" className={clsx(TITLE_BUTTON, 'bg-gradient-to-br from-[#f0957a] to-[#d43c14]')}>
          <svg viewBox="0 0 13 13" className="h-[13px] w-[13px]"><path d="M2 2l9 9M11 2l-9 9" stroke="#fff" strokeWidth="2" /></svg>
        </button>
      </header>

      <div className="flex h-5 shrink-0 items-end gap-px pl-0.5" role="tablist">
        <button role="tab" aria-selected="true" className="h-5 rounded-t-sm border-x border-t-2 border-[#91a7b4] border-t-[#f0a030] bg-[#fcfcfe] px-px">
          <span className="block border border-dotted border-black px-[3px] leading-4">构件工程量</span>
        </button>
        <button role="tab" aria-selected="false" className="h-[18px] rounded-t-sm border border-b-0 border-[#91a7b4] bg-[#f6f5ee] px-[3px]">做法工程量</button>
      </div>

      <div className="flex min-h-0 flex-1 flex-col border border-[#919b9c] bg-[#fcfcfe] pr-px pb-[3px] pl-1">
        <div className="flex h-[25px] shrink-0 items-center">
          <label className="flex shrink-0 items-center gap-1.5">
            <input type="radio" name="mode" checked={mode === 'list'} onChange={() => setMode('list')} className={RADIO} />
            清单工程量
          </label>
          <label className="flex shrink-0 items-center gap-2 pl-px">
            <input type="radio" name="mode" checked={mode === 'quota'} onChange={() => setMode('quota')} className={RADIO} />
            定额工程量
          </label>
          <span className="ml-2 h-5 w-px bg-[#d0cec0]" />
          <div className="pl-1"><CheckBox label="显示房间、组合构件量" checked /></div>
          <span className="ml-2 h-5 w-px bg-[#d0cec0]" />
          <span className="ml-0.5 shrink-0 bg-[#ece9d8] leading-[18px]">过滤构件类型：</span>
          <Combo label="过滤构件类型" value="柱" className="ml-0.5 w-[126px] border border-[#7f9db9]" />
          <span className="ml-1 h-5 w-px bg-[#d0cec0]" />
          <div className="pl-0.5"><CheckBox label="只显示标准层单层量" checked disabled /></div>
        </div>

        <div className="flex min-h-0 flex-1 flex-col border border-[#7f9db9] bg-white">
          <div className="min-h-0 flex-1 overflow-hidden">
            <QuantityTable />
          </div>
          <div className="flex h-[17px] shrink-0 items-center gap-0.5 bg-[#f3f3ee]">
            <button aria-label="scroll left" className="flex h-4 w-4 shrink-0 items-center justify-center rounded-sm border border-[#b4c8f6] bg-[#cbdafd]">
              <svg viewBox="0 0 8 8" className="h-2 w-2"><path d="M6 0l-4 4l4 4" fill="none" stroke="#4d6185" strokeWidth="2" /></svg>
            </button>
            <div className="min-w-0 flex-1">
              <div className="flex h-4 w-[69%] items-center justify-center gap-px rounded-sm border border-[#b4c8f6] bg-[#c4d5fd]">
                {[0, 1, 2, 3].map(i => <span key={i} className="h-1.5 w-px bg-[#eef4fe] shadow-[1px_0_0_#8cb0f8]" />)}
              </div>
            </div>
            <button aria-label="scroll right" className="flex h-4 w-4 shrink-0 items-center justify-center rounded-sm border border-[#b4c8f6] bg-[#cbdafd]">
              <svg viewBox="0 0 8 8" className="h-2 w-2"><path d="M2 0l4 4l-4 4" fill="none" stroke="#4d6185" strokeWidth="2" /></svg>
            </button>
          </div>
        </div>
      </div>

      <footer className="flex h-[38px] shrink-0 items-center pr-1 pl-1">
        <button className={clsx(XP_BUTTON, 'w-32')}>设置分类及工程量(<u>S</u>)</button>
        <button className={clsx(XP_BUTTON, 'ml-[22px] w-[82px]')}>导出到<u>E</u>xcel</button>
        <button className={clsx(XP_BUTTON, 'ml-4 w-26')}>导出到已有E<u>x</u>cel</button>
        <span className="flex-1" />
        <button className={clsx(XP_BUTTON, 'w-[72px]')}>退出</button>
      </footer>
    </div>
  );
}

const ARROWS = [
  'M103 271L334 44',
  'M352 97L418 40',
  'M265 291L309 330',
  'M249 399L307 374',
  'M316 405L397 377',
  'M491 308L428 334',
  'M660 329L716 361',
  'M640 240L807 427',
];

function Annotations() {
  return (
    <svg className="pointer-events-none absolute inset-0 h-full w-full" aria-hidden="true">
      <defs>
        <marker id="head" markerUnits="userSpaceOnUse" markerWidth="18" markerHeight="14" refX="17" refY="7" orient="auto">
          <path d="M0 0l18 7l-18 7z" fill="#f00" />
        </marker>
      </defs>
      <ellipse cx="622" cy="219" rx="93" ry="42" fill="none" stroke="#e01010" strokeWidth="3" />
      {ARROWS.map(d => (
        <path key={d} d={d} stroke="#f00a0a" strokeWidth="3" markerEnd="url(#head)" />
      ))}
    </svg>
  );
}

export default function App() {
  return (
    <div className="relative flex h-screen flex-col overflow-hidden bg-[#ece9d8] font-['Liberation_Sans','Noto_Sans_CJK_SC',sans-serif] text-[12px] leading-4 text-black">
      <MenuBar />
      <MainToolbar />
      <main className="flex min-h-0 flex-1">
        <Navigator />
        <div className="ml-1 flex w-[194px] shrink-0 flex-col">
          <ComponentList />
          <PropertyEditor />
        </div>
        <div className="ml-[3px] flex min-w-0 flex-1 flex-col">
          <DrawToolbars />
          <div className="flex min-h-0 flex-1">
            <SideTools />
            <Canvas />
          </div>
        </div>
      </main>
      <QuantityDialog />
      <Annotations />
    </div>
  );
}
